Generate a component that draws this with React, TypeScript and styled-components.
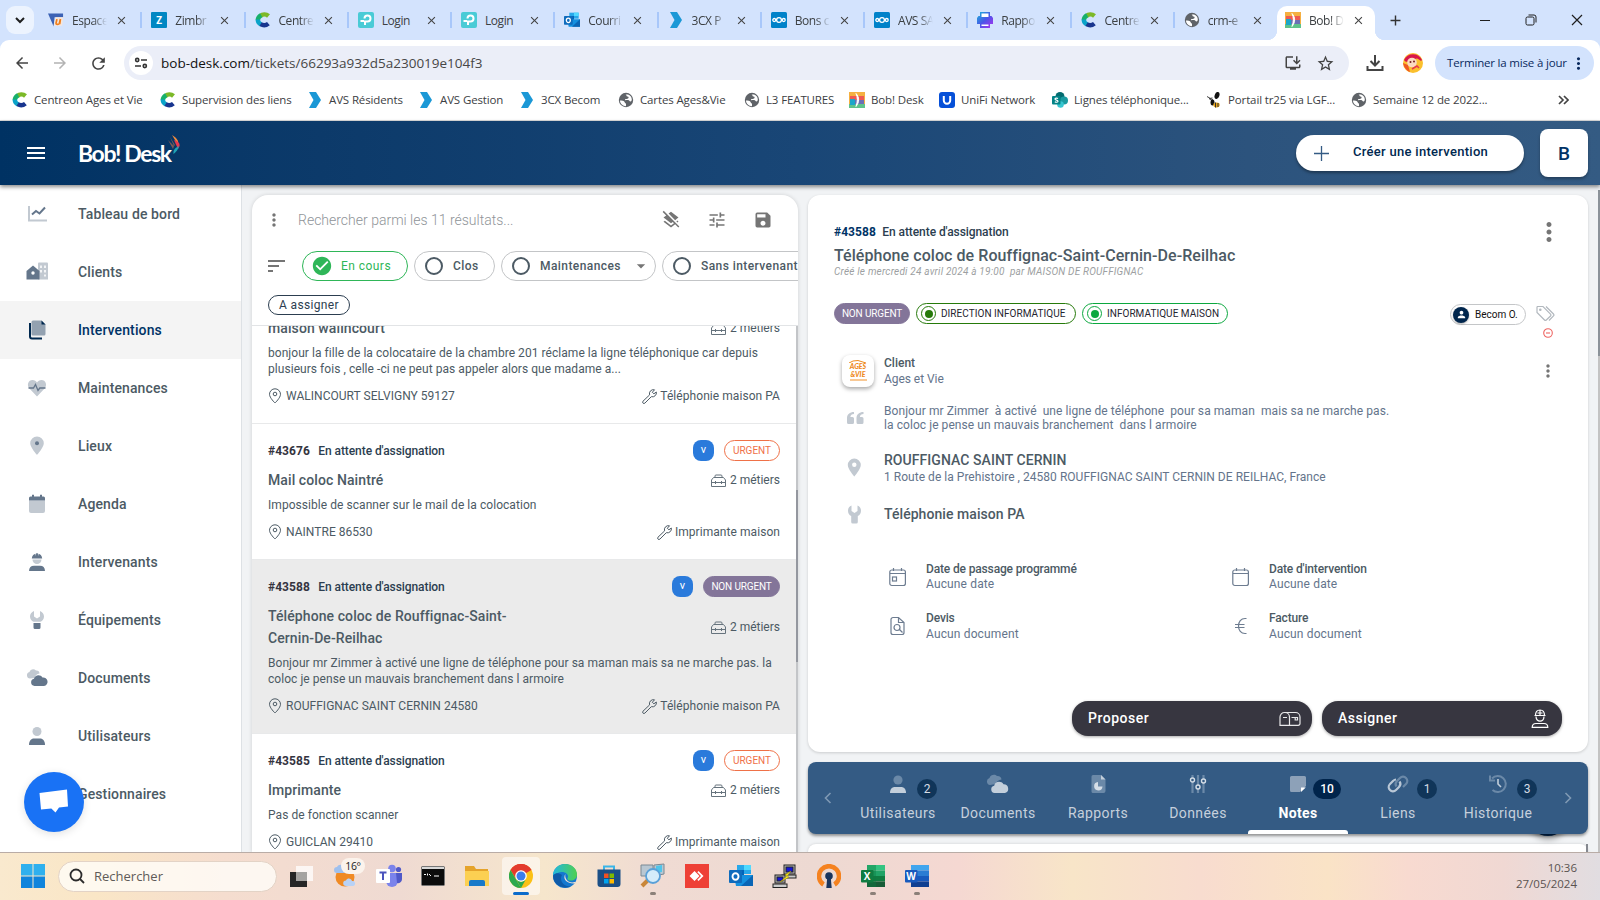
import React from "react";
import styled, { createGlobalStyle, css } from "styled-components";
import {
  MdArrowBack, MdArrowForward, MdRefresh, MdClose, MdAdd, MdMoreVert, MdTune, MdSave, MdLayersClear,
  MdCheckCircle, MdArrowDropDown, MdStarBorder, MdInstallDesktop, MdPerson,
} from "react-icons/md";

const GlobalStyle = createGlobalStyle`
  * { box-sizing: border-box; }
  html, body { margin: 0; padding: 0; }
  body { width: 1600px; height: 900px; overflow: hidden; font-family: Roboto, "Liberation Sans", sans-serif; background: #f1f3f5; }
  svg { display: block; flex: none; }
`;

const UI_FONT = '"Open Sans", "Noto Sans", sans-serif';
const LIGHT = "#c2c9d1";
const DARK = "#64768b";

const Screen = styled.div`
  width: 1600px; height: 900px; display: flex; flex-direction: column; overflow: hidden;
`;

/* ---------- Browser chrome ---------- */
const TabStrip = styled.div`
  height: 40px; flex: none; background: #d3e3fd; display: flex; align-items: flex-end; padding-left: 6px;
  font-family: ${UI_FONT};
`;
const TabSearch = styled.div`
  width: 28px; height: 28px; margin: 0 4px 6px 0; border-radius: 9px; background: #ecf3fe;
  display: flex; align-items: center; justify-content: center; color: #1f1f1f;
`;
const TabItem = styled.div<{ $active?: boolean; $last?: boolean }>`
  position: relative; width: 103.25px; height: 34px; flex: none; display: flex; align-items: center;
  padding: 0 0 6px 10px; gap: 5px;
  ${(p) => !p.$active && !p.$last && css`
    &::after { content: ""; position: absolute; right: -1px; top: 6px; width: 2px; height: 16px; background: #a8c7fa; }
  `}
  ${(p) => p.$active && css`
    width: 98px; background: #fff; border-radius: 10px 10px 0 0; padding-left: 8px;
    &::before, &::after { content: ""; position: absolute; bottom: 0; width: 10px; height: 10px; }
    &::before { left: -10px; background: radial-gradient(circle at 0 0, transparent 10px, #fff 10.5px); }
    &::after { right: -10px; background: radial-gradient(circle at 100% 0, transparent 10px, #fff 10.5px); }
  `}
`;
const TabTitle = styled.div<{ $fade?: boolean }>`
  width: 38px; margin-left: 3px; overflow: hidden; white-space: nowrap; font-size: 12px; letter-spacing: -0.45px; color: #3c4043;
  ${(p) => p.$fade && css`-webkit-mask-image: linear-gradient(90deg, #000 55%, transparent 92%); mask-image: linear-gradient(90deg, #000 55%, transparent 92%);`}
`;
const TabClose = styled.div`
  color: #444; display: flex; stroke: currentColor; stroke-width: 1px;
`;
const WindowButtons = styled.div`
  margin-left: auto; display: flex; width: 138px; height: 40px; align-items: center; justify-content: space-around; color: #1f1f1f;
`;
const NewTab = styled.div`margin: 0 0 11px 12px; color: #333; display: flex;`;

const ToolbarOuter = styled.div`height: 48px; flex: none; background: #d3e3fd;`;
const Toolbar = styled.div`
  height: 48px; background: #fff; border-radius: 9px 9px 0 0; display: flex; align-items: center; padding: 0 6px 2px 13px;
  color: #474747; font-family: ${UI_FONT};
`;
const NavIcon = styled.div<{ $muted?: boolean }>`
  width: 38px; display: flex; color: ${(p) => (p.$muted ? "#b3b3b3" : "#444")};
`;
const Omnibox = styled.div`
  width: 1225px; height: 34px; border-radius: 17px; background: #ebeef8; display: flex; align-items: center;
  padding: 0 14.5px 0 5px; margin-left: -3px;
`;
const SiteInfo = styled.div`
  width: 24px; height: 24px; border-radius: 50%; background: #fff; display: flex; align-items: center; justify-content: center; margin-right: 8px;
`;
const Url = styled.div`font-size: 13.5px; letter-spacing: 0; color: #474747; flex: 1; margin-top: -1px; b { font-weight: 400; color: #111; }`;
const OmniIcons = styled.div`display: flex; gap: 14px; color: #444;`;
const DownloadSlot = styled.div`margin-left: 16px; color: #444;`;
const ProfileSlot = styled.div`margin: 0 12px 0 18px;`;
const UpdatePill = styled.div`
  width: 159px; height: 34px; border-radius: 17px; background: #d3e3fd; color: #0a2a5e; display: flex; align-items: center;
  font-size: 11.5px; letter-spacing: -0.18px; padding-left: 12px; white-space: nowrap; gap: 2px;
  span { margin-top: -1px; }
`;

const Bookmarks = styled.div`
  height: 33px; flex: none; background: #fff; border-bottom: 1px solid #dcdcdc; display: flex; align-items: center;
  padding: 0 0 9px 12px; font-family: ${UI_FONT}; color: #3c4043;
`;
const Bookmark = styled.div<{ $w: number }>`
  width: ${(p) => p.$w}px; display: flex; align-items: center; gap: 6px; flex: none; font-size: 11.5px; letter-spacing: -0.13px; white-space: nowrap;
`;
const Overflow = styled.div`margin-left: auto; padding-right: 31px; color: #444;`;

/* ---------- Application header ---------- */
const Header = styled.header`
  position: relative; z-index: 3; height: 64px; flex: none; display: flex; align-items: center; padding: 0 12px 0 27px;
  background: linear-gradient(90deg, #003263 0%, #0c3a6a 20%, #194676 50%, #2c537d 78%, #345b83 100%);
  box-shadow: 0 2px 4px rgba(0, 0, 0, 0.45);
`;
const Burger = styled.div`
  width: 18px; height: 12px; border-top: 2px solid #fff; border-bottom: 2px solid #fff; display: flex; align-items: center;
  &::before { content: ""; width: 100%; height: 2px; background: #fff; }
`;
const Brand = styled.div`
  margin-left: 33px; display: flex; color: #fff; font-family: Lato, sans-serif; font-weight: 700; font-size: 23px; letter-spacing: -1.4px;
  line-height: 30px; white-space: nowrap;
`;
const Feather = styled.svg`margin: -3px 0 0 -3px;`;
const CreateButton = styled.div`
  margin-left: auto; width: 228px; height: 36px; border-radius: 18px; background: #fff; box-shadow: 0 2px 3px rgba(0, 0, 0, 0.35);
  display: flex; align-items: center; padding-left: 18px; gap: 24px; color: #002850; font-weight: 500; font-size: 13px; letter-spacing: 0.29px;
  span { margin-top: -3px; }
`;
const Avatar = styled.div`
  margin-left: 16px; width: 48px; height: 48px; border-radius: 8px; background: #fff; box-shadow: 0 2px 3px rgba(0, 0, 0, 0.3);
  display: flex; align-items: center; justify-content: center; color: #003366; font-weight: 500; font-size: 19px;
`;

/* ---------- Body ---------- */
const Body = styled.div`flex: none; height: 667px; display: flex; overflow: hidden; position: relative;`;
const Sidebar = styled.nav`width: 242px; flex: none; background: #fff; border-right: 1px solid #dde1e5; position: relative;`;
const NavItem = styled.div<{ $active?: boolean }>`
  height: 58px; display: flex; align-items: center; padding-left: 25px; gap: 29px; font-size: 14px; font-weight: 500; letter-spacing: 0.12px;
  color: ${(p) => (p.$active ? "#003366" : "#4c5a64")};
  background: ${(p) => (p.$active ? "#f4f4f4" : "transparent")};
`;
const ChatBubble = styled.div`
  position: absolute; left: 24px; top: 587px; width: 60px; height: 60px; border-radius: 50%; background: #1972f5;
  box-shadow: 0 2px 8px rgba(0, 0, 0, 0.12); display: flex; align-items: center; justify-content: center;
`;
const Content = styled.main`flex: 1; display: flex; padding: 10px 0 0 10px; gap: 10px; background: #f1f3f5; position: relative;`;

const ListPanel = styled.section`
  width: 546px; flex: none; background: #fff; border-radius: 16px 16px 0 0; overflow: hidden; display: flex; flex-direction: column;
  box-shadow: 0 0 4px rgba(0, 0, 0, 0.14);
`;
const SearchRow = styled.div`
  height: 50px; display: flex; align-items: center; padding: 0 25px 0 12px; color: #757575; flex: none;
`;
const Placeholder = styled.div`
  margin-left: 14px; flex: 1; font-size: 14px; font-weight: 300; letter-spacing: 0; color: #8f9498;
`;
const SearchIcons = styled.div`display: flex; gap: 26px;`;
const FilterRow = styled.div`
  height: 42px; padding: 6px 0 6px 16px; display: flex; align-items: center; color: #757575; flex: none; overflow: hidden;
`;
const SortBars = styled.div`
  width: 34px; display: flex; flex-direction: column; gap: 3px; flex: none;
  i { height: 2px; background: #757575; width: 17px; }
  i:nth-child(2) { width: 11px; }
  i:nth-child(3) { width: 5px; }
`;
const FilterChip = styled.div<{ $w: number; $on?: boolean }>`
  width: ${(p) => p.$w}px; height: 30px; border-radius: 15px; border: 1px solid ${(p) => (p.$on ? "#2fb658" : "#c3c5c7")}; flex: none;
  display: flex; align-items: center; padding-left: 10px; margin-right: 6px; gap: 10px; font-size: 12px; font-weight: ${(p) => (p.$on ? 400 : 500)}; letter-spacing: ${(p) => (p.$on ? 0.45 : 0.42)}px;
  color: ${(p) => (p.$on ? "#2fb658" : "#4c5a64")}; white-space: nowrap;
`;
const Ring = styled.div`width: 18px; height: 18px; border-radius: 50%; border: 2px solid #4c5a64; flex: none;`;
const CheckSlot = styled.div`width: 18px; display: flex; justify-content: center;`;
const AssignRow = styled.div`height: 39px; border-bottom: 1px solid #e2e4e6; padding: 8px 16px 0; flex: none;`;
const AssignChip = styled.div`
  width: 82px; height: 20px; border-radius: 10px; border: 1px solid #2c3e50; font-size: 12px; line-height: 18px; letter-spacing: 0.35px;
  padding-left: 10px; color: #2c3e50;
`;
const Scroller = styled.div`flex: 1; overflow: hidden; position: relative; display: flex; min-height: 0;`;
const Tickets = styled.div`flex: 1; margin-top: -12px;`;
const Track = styled.div`width: 2px; background: #c3c5c8; padding-top: 164px; &::before { content: ""; display: block; height: 172px; background: #94979f; }`;

const Ticket = styled.article<{ $selected?: boolean; $tail?: boolean }>`
  padding: ${(p) => (p.$tail ? "3px" : "16px")} 16px 19px; border-bottom: 1px solid #e8e9ea;
  background: ${(p) => (p.$selected ? "#ebebeb" : "#fff")}; color: #4c5a64;
`;
const TicketTop = styled.div`height: 21px; display: flex; align-items: center; margin-bottom: 8px;`;
const TicketId = styled.span<{ $blue?: boolean }>`
  font-size: 12px; font-weight: 700; letter-spacing: 0.05px; margin-right: ${(p) => (p.$blue ? 6.5 : 8.5)}px; color: ${(p) => (p.$blue ? "#003366" : "#35343f")};
`;
const Status = styled.span`font-size: 12px; font-weight: 500; letter-spacing: -0.08px; color: #2c3e50; flex: 1;`;
const Who = styled.span`
  width: 21px; height: 21px; border-radius: 8px; background: #2a7adb; color: #fff; font-size: 11px; line-height: 20px; text-align: center; margin-right: 10px;
`;
const Priority = styled.span<{ $urgent?: boolean; $narrow?: boolean }>`
  width: ${(p) => (p.$urgent ? 56 : p.$narrow ? 76 : 77)}px; height: 21px; border-radius: 11px; font-size: 10px; line-height: 19px; text-align: center;
  letter-spacing: ${(p) => (p.$urgent ? 0 : -0.15)}px; white-space: nowrap; flex: none;
  border: 1px solid ${(p) => (p.$urgent ? "#ef7148" : "#837599")}; background: ${(p) => (p.$urgent ? "#fff" : "#837599")};
  color: ${(p) => (p.$urgent ? "#ef7148" : "#fff")};
`;
const TitleRow = styled.div`display: flex; align-items: center; justify-content: space-between; margin-bottom: 6px;`;
const TicketTitle = styled.div`font-size: 14px; font-weight: 500; line-height: 22px; width: 250px; letter-spacing: 0.09px; white-space: pre;`;
const Jobs = styled.div`display: flex; align-items: center; gap: 4px; font-size: 12px;`;
const Desc = styled.div`font-size: 12px; line-height: 16px; margin-bottom: 11px; white-space: pre; letter-spacing: 0.05px;`;
const TicketBottom = styled.div`display: flex; justify-content: space-between; font-size: 12px; line-height: 16px; height: 16px; letter-spacing: 0.03px;`;
const IconText = styled.div`display: flex; align-items: center; gap: 4px; white-space: nowrap;`;
const JobText = styled(IconText)`gap: 3px; letter-spacing: 0.06px;`;

const RightCol = styled.div`width: 780px; flex: none; display: flex; flex-direction: column;`;
const Detail = styled.section`
  height: 557px; flex: none; background: #fff; border-radius: 12px; box-shadow: 0 1px 3px rgba(0, 0, 0, 0.16); padding: 29px 26px 0;
`;
const DetailHead = styled.div`display: flex; justify-content: space-between;`;
const IdLine = styled.div`display: flex; height: 16px; align-items: center; white-space: nowrap;`;
const DetailTitle = styled.h1`
  margin: 6px 0 0; font-size: 16px; line-height: 20px; font-weight: 500; letter-spacing: 0.06px; color: #4c5a64; white-space: nowrap;
`;
const Created = styled.div`font-size: 10px; line-height: 12px; font-style: italic; color: #9d9fa2; letter-spacing: 0.21px; white-space: pre;`;
const HeadDots = styled.div`margin: -7px -2px 0 0; color: #757575;`;
const PillRow = styled.div`margin-top: 25px; height: 22px; display: flex; align-items: flex-start;`;
const SkillPill = styled.div<{ $w: number; $c: string }>`
  width: ${(p) => p.$w}px; height: 21px; border: 1px solid ${(p) => p.$c}; border-radius: 11px; margin-left: 6px; display: flex; align-items: center;
  padding-left: 4px; gap: 5px; font-size: 10px; letter-spacing: 0.04px; white-space: nowrap; color: #26252f;
`;
const Dot = styled.i<{ $c: string }>`
  width: 15px; height: 15px; border-radius: 50%; border: 1.5px solid ${(p) => p.$c}; display: flex; align-items: center; justify-content: center;
  &::before { content: ""; width: 8px; height: 8px; border-radius: 50%; background: ${(p) => p.$c}; }
`;
const Owner = styled.div`
  margin: 1px 10px 0 auto; width: 76px; height: 21px; border: 1px solid #c4c6c8; border-radius: 11px; display: flex; align-items: center;
  gap: 6px; padding-left: 2px; font-size: 10px; color: #111; white-space: nowrap;
`;
const OwnerIcon = styled.div`
  width: 16px; height: 16px; border-radius: 50%; background: #00264d; color: #fff; display: flex; align-items: center; justify-content: center;
  box-shadow: 0 1px 2px rgba(0, 0, 0, 0.3);
`;
const TagSlot = styled.div`width: 19px; margin-right: 7px; display: flex; flex-direction: column; align-items: center; gap: 6px; padding: 2px 0 0;`;

const InfoRow = styled.div<{ $mt: number; $h: number }>`margin-top: ${(p) => p.$mt}px; height: ${(p) => p.$h}px; display: flex; align-items: center; color: #64748b;`;
const InfoIcon = styled.div`width: 50px; padding-left: 13px; display: flex; flex: none;`;
const LogoSlot = styled.div`width: 50px; padding-left: 8px; display: flex; flex: none;`;
const ClientLogo = styled.div`
  width: 32px; height: 32px; border-radius: 8px; background: #fff; box-shadow: 0 2px 4px rgba(0, 0, 0, 0.35); color: #ee8a1d;
  font-family: Lato, sans-serif; font-weight: 900; font-style: italic; font-size: 7px; line-height: 7.5px;
  display: flex; flex-direction: column; align-items: center; padding-top: 5px;
`;
const LogoBar = styled.div`width: 17px; height: 2px; background: #f8c894; margin-top: 1px;`;
const InfoText = styled.div<{ $lh?: number; $ls?: number }>`font-size: 12px; line-height: ${(p) => p.$lh ?? 16}px; letter-spacing: ${(p) => p.$ls ?? 0.03}px; white-space: pre; flex: 1;`;
const Label = styled.div`color: #4c5a64; font-weight: 500; letter-spacing: 0;`;
const Heading = styled.div`font-size: 14px; line-height: 18px; font-weight: 500; letter-spacing: 0.06px; color: #4c5a64;`;
const RowDots = styled.div`margin-right: 4px; color: #757575;`;
const FieldGrid = styled.div`margin: 38px 0 0 50px; display: grid; grid-template-columns: 343px 1fr; row-gap: 18px;`;
const Field = styled.div<{ $lh: number }>`display: flex; align-items: center; color: #64748b; font-size: 12px; line-height: ${(p) => p.$lh}px; letter-spacing: 0.14px;`;
const FieldIcon = styled.div`width: 42px; padding-left: 5px;`;
const FieldLabel = styled.div`font-weight: 500; color: #4c5a64; letter-spacing: -0.15px; line-height: 16px;`;
const Actions = styled.div`display: flex; justify-content: flex-end; gap: 10px; margin-top: 59px;`;
const Action = styled.div`
  width: 240px; height: 35px; border-radius: 16px; background: #373640; color: #fff; display: flex; align-items: center; justify-content: space-between;
  padding: 0 11px 0 16px; font-size: 14px; font-weight: 500; letter-spacing: 0.5px; box-shadow: 0 1px 3px rgba(0, 0, 0, 0.35);
  span { margin-top: -2px; }
`;

const TabBar = styled.div`
  margin-top: 10px; height: 72px; flex: none; border-radius: 8px; background: #345b84; box-shadow: 0 2px 3px rgba(0, 0, 0, 0.4);
  display: flex; align-items: stretch; position: relative; z-index: 2;
`;
const Arrow = styled.div`width: 40px; display: flex; align-items: center; justify-content: center;`;
const SectionTab = styled.div<{ $on?: boolean }>`
  position: relative; width: 100px; display: flex; flex-direction: column; align-items: center; padding-top: 12px; font-size: 14px;
  line-height: 16px; letter-spacing: ${(p) => (p.$on ? 0.3 : 0.42)}px; color: ${(p) => (p.$on ? "#fff" : "#c6d0dc")}; font-weight: ${(p) => (p.$on ? 700 : 400)};
  white-space: nowrap; gap: 11px;
  ${(p) => p.$on && css`&::after { content: ""; position: absolute; left: 0; right: 0; bottom: 0; height: 4px; background: #fff; border-radius: 3px 3px 0 0; }`}
`;
const TabGlyph = styled.div`height: 20px; display: flex; align-items: center;`;
const Count = styled.div<{ $on?: boolean }>`
  position: absolute; top: 17px; left: ${(p) => (p.$on ? 65 : 69)}px; height: 20px; width: ${(p) => (p.$on ? 28 : 20)}px; border-radius: 10px;
  background: ${(p) => (p.$on ? "#00244b" : "#103559")}; color: ${(p) => (p.$on ? "#fff" : "#d5dde6")}; font-size: 12px; line-height: 20px; font-weight: ${(p) => (p.$on ? 500 : 400)};
  text-align: center; letter-spacing: 0;
`;
const NextPanel = styled.div`
  margin-top: 10px; height: 20px; flex: none; background: #fff; border-radius: 8px 8px 0 0; box-shadow: 0 0 3px rgba(0, 0, 0, 0.15);
  display: flex; justify-content: flex-end; &::after { content: ""; width: 2px; background: #85888f; }
`;
const Fab = styled.div`
  position: absolute; right: 32px; top: 611px; width: 40px; height: 40px; border-radius: 50%; background: #00244b; box-shadow: 0 2px 7px rgba(0, 0, 0, 0.5); z-index: 1;
`;
const PageScroll = styled.div`
  margin: -5px 0 0 auto; width: 2px; background: #c3c3c3; &::before { content: ""; display: block; height: 166px; background: #8b9299; }
`;

/* ---------- Taskbar ---------- */
const Taskbar = styled.footer`
  height: 48px; flex: none; border-top: 1px solid #b9aca6; display: flex; align-items: center; padding: 0 23px 1px 21px; font-family: ${UI_FONT};
  background: linear-gradient(90deg, #f9e9ce 0%, #fae6c6 6%, #f5ddcf 14%, #efdad2 25%, #f6e6cc 34%, #f0dbd3 41%, #edd9d2 51%, #f5d8d2 60%, #f8e5c8 67%, #f8dccf 75%, #fae3c6 83%, #f8dad0 88%, #f0d8d3 94%, #e1dde1 100%);
`;
const SearchBox = styled.div`
  margin: 0 2px 0 13px; width: 219px; height: 31px; border-radius: 16px; background: rgba(255, 252, 248, 0.82); border: 1px solid #e3d3c6;
  display: flex; align-items: center; padding-left: 10px; gap: 9px; font-size: 13px; color: #5f5b58;
`;
const AppSlot = styled.div<{ $focus?: boolean }>`
  position: relative; width: 44px; height: 44px; display: flex; align-items: center; justify-content: center;
  ${(p) => p.$focus && css`
    &::before { content: ""; position: absolute; inset: 3px; border-radius: 4px; background: rgba(255, 255, 255, 0.55); }
  `}
  svg { position: relative; }
`;
const Running = styled.i<{ $focus?: boolean }>`
  position: absolute; bottom: ${(p) => (p.$focus ? 3 : 3)}px; left: 50%; width: ${(p) => (p.$focus ? 16 : 6)}px; margin-left: ${(p) => (p.$focus ? -8 : -3)}px;
  height: 3px; border-radius: 2px; background: ${(p) => (p.$focus ? "#0b6bcb" : "#8b8079")};
`;
const Temp = styled.span`
  position: absolute; right: 2px; top: 4px; height: 16px; width: 24px; border-radius: 8px; background: #fbf3ec; font-size: 10.5px; line-height: 16px;
  text-align: center; color: #222; letter-spacing: -0.3px;
`;
const Clock = styled.div`margin-left: auto; text-align: right; font-size: 11.5px; line-height: 16px; color: #5a5350; span { display: block; }`;

/* ---------- Small drawings ---------- */
const Centreon = () => (
  <svg width="16" height="16" viewBox="0 0 16 16" fill="none" strokeWidth="4.400">
    <path d="M13.500 4C11 1.800 7.500 2.200 5.400 4" stroke="#7cb928" />
    <path d="M6.200 3.200C4 4.400 2.800 6.200 2.800 8.200" stroke="#17b06b" />
    <path d="M2.800 7.600c0 2.400 1.200 4 3.400 5" stroke="#0aa3c9" />
    <path d="M5.600 12.200c2.600 1.600 5.600 1.200 7.800-.6" stroke="#18358f" />
  </svg>
);
const Chevron3 = () => (
  <svg width="16" height="16" viewBox="0 0 16 16"><path d="M2 0h7l5 8-5 8H2l4.500-8z" fill="#1b98d6" /></svg>
);
const Globe = () => (
  <svg width="16" height="16" viewBox="0 0 16 16"><circle cx="8" cy="8" r="7.200" fill="#5f6368" /><path d="M2 8.500c1.500-.3 3 0 4 .8s.5 2 2 2.200v2.700C5 14 2 12 2 8.500zM7.500 2.500C9 3 8 4.500 9.500 4.500s1.500 2 0 2.300-2.500.2-2.500 1 1.500 0 3 .3 1.500 1.700 2.500 1.500 1.200-1 1.300-2C13.800 4 11 2 7.500 2.500z" fill="#fff" /></svg>
);
const BobIcon = () => (
  <svg width="16" height="16" viewBox="0 0 16 16"><rect width="16" height="16" fill="#f5b041" /><path d="M1 4h14v4H1z" fill="#ee5a52" /><path d="M1 8h14v4H1z" fill="#6a6fb5" /><path d="M0 12h16v4H0z" fill="#5fc28b" /><path d="M1 7h5v6H1z" fill="#1ba6c9" /><path d="M7 1.500c3.500 4 3.500 8.500 0 13 1.800-5 1.800-9 0-13z" fill="#fff" stroke="#fff" strokeWidth="1" /></svg>
);
const LetterTile = styled.span<{ $bg: string }>`
  width: 16px; height: 16px; flex: none; background: ${(p) => p.$bg}; color: #fff; font: 700 10px/16px "Open Sans", sans-serif; text-align: center; border-radius: 1px;
`;
const UnivIcon = () => (
  <svg width="16" height="16" viewBox="0 0 17 16"><path d="M0 1h16v4H7l-1 10z" fill="#3b62b5" /><path d="M8 5h8l-1 9H6z" fill="#f4e6dc" /><path d="M9.500 7l-1 4.500c0 1.500 3 1.500 3.600 0L13.200 7l-.8 5.500" fill="none" stroke="#ef7d1a" strokeWidth="1.800" /></svg>
);
const TpLink = () => (
  <svg width="16" height="16" viewBox="0 0 16 16"><rect width="16" height="16" rx="2" fill="#4acbd6" /><path d="M2.500 9h3.500M7 13V9.500h2.500a3 3 0 1 0-3-3" fill="none" stroke="#fff" strokeWidth="2" /></svg>
);
const Outlook = ({ s = 16 }: { s?: number }) => (
  <svg width={s} height={s} viewBox="0 0 24 24"><path d="M8 1h14v9H8z" fill="#28a8ea" /><path d="M15 1h7v5h-7z" fill="#50d9ff" /><path d="M8 6h7v6H8z" fill="#0364b8" /><path d="M5 11h19v11H7z" fill="#1490df" /><path d="M24 11v11H12z" fill="#0a65b5" /><rect y="6" width="13" height="13" rx="1" fill="#0f6cbd" /><ellipse cx="6.500" cy="12.500" rx="3" ry="3.300" fill="none" stroke="#fff" strokeWidth="1.900" /></svg>
);
const Nextcloud = () => (
  <svg width="16" height="16" viewBox="0 0 16 16" fill="none" stroke="#fff" strokeWidth="1.300"><rect width="16" height="16" rx="1.500" fill="#0082c9" stroke="none" /><circle cx="8" cy="8" r="2.400" /><circle cx="3.300" cy="8" r="1.500" /><circle cx="12.700" cy="8" r="1.500" /></svg>
);
const PrinterIcon = () => (
  <svg width="16" height="16" viewBox="0 0 16 16"><defs><linearGradient id="prn" x1="0" y1="0" x2="1" y2="1"><stop offset="0" stopColor="#18b9d8" /><stop offset=".5" stopColor="#4a55e8" /><stop offset="1" stopColor="#b12ff0" /></linearGradient></defs><path d="M3 0h10v4h1.500L16 6v6h-3v4H3v-4H0V6l1.500-2H3z" fill="url(#prn)" /><path d="M4.500 1.500h7V5h-7zM4.500 12.500h7V14h-7z" fill="#fff" /></svg>
);
const UniFi = () => (
  <svg width="16" height="16" viewBox="0 0 16 16"><rect width="16" height="16" rx="3" fill="#0650d8" /><path d="M4.800 4v4.500a3.200 3.200 0 0 0 6.400 0V4" fill="none" stroke="#fff" strokeWidth="2" /></svg>
);
const SharePoint = () => (
  <svg width="16" height="16" viewBox="0 0 16 16"><circle cx="8" cy="4.500" r="4.500" fill="#036c70" /><circle cx="12" cy="8.500" r="4" fill="#1a9ba1" /><circle cx="8.500" cy="12.500" r="3.300" fill="#37c6d0" /><rect y="4" width="8.500" height="8.500" rx="1" fill="#038387" /><path d="M6 6.500c-1-.7-3-.6-3 .5 0 1.300 3 .8 3 2.300 0 1.100-2 1.200-3.200.5" fill="none" stroke="#fff" strokeWidth="1.200" /></svg>
);
const Bee = () => (
  <svg width="16" height="16" viewBox="0 0 16 16"><path d="M7 8L1 4.500M6.500 6L3 6.500l4 3" stroke="#444" fill="none" /><ellipse cx="11" cy="3.500" rx="2.300" ry="3.600" transform="rotate(20 11 3.500)" fill="#111" /><ellipse cx="6.500" cy="10.500" rx="2" ry="3" fill="#111" /><ellipse cx="10.500" cy="13" rx="3.200" ry="2.400" fill="#e8a51d" /><path d="M9.500 10.500v5M12 11v4" stroke="#333" /></svg>
);

const Duo = ({ name }: { name: string }) => {
  const g: Record<string, React.ReactNode> = {
    chart: <><path d="M3 3v14.500h18" stroke={LIGHT} strokeWidth="2" fill="none" transform="translate(1 1)" /><path d="M7 12.500l4-3.500 3.500 2.500 5.500-6" stroke={DARK} strokeWidth="2" fill="none" /></>,
    clients: <><path d="M13 3.500a1 1 0 0 1 1-1h8a1 1 0 0 1 1 1V19.500H13z" fill={LIGHT} /><path d="M16 5.500v2.500M20 5.500v2.500M16 10v2.500M20 10v2.500M20 14.500v2" stroke="#fff" strokeWidth="1.600" /><path d="M1.500 11L8 5.500l6.500 5.500v8.500h-13z" fill={DARK} /><circle cx="8" cy="13" r="1.700" fill="#fff" /></>,
    interventions: <><path d="M5 5v13.500a2 2 0 0 0 2 2h10" stroke="#00284f" strokeWidth="2" fill="none" /><path d="M8 2.500h8.500l4 4V16a1.500 1.500 0 0 1-1.500 1.500H8A1.500 1.500 0 0 1 6.500 16V4A1.500 1.500 0 0 1 8 2.500z" fill="#93a1b0" /><path d="M16.500 2.500v4h4z" fill="#00284f" /></>,
    heart: <><path d="M12 20.500L4.200 12.300C1.500 9 3.300 4 7.500 4c2 0 3.500 1 4.500 2.500C13 5 14.500 4 16.500 4c4.200 0 6 5 3.300 8.300z" fill={LIGHT} /><path d="M3.500 12h5l2-3.500 2.500 6 1.800-2.500h5.700" stroke={DARK} strokeWidth="1.300" fill="none" /></>,
    pin: <><path d="M12 21S5.200 13.500 5.200 9.300a6.800 6.800 0 0 1 13.600 0c0 4.200-6.800 11.700-6.800 11.700z" fill={LIGHT} /><circle cx="12" cy="9.300" r="2" fill={DARK} /></>,
    agenda: <><path d="M4 8.500h16V19a2 2 0 0 1-2 2H6a2 2 0 0 1-2-2z" fill={LIGHT} /><path d="M4 8.500V6a1.500 1.500 0 0 1 1.500-1.500H7V2.800h2v1.700h6V2.800h2v1.700h1.500A1.500 1.500 0 0 1 20 6v2.500z" fill={DARK} /></>,
    worker: <><path d="M7.500 9.500h9a4.500 4.500 0 0 1-9 0z" fill={LIGHT} /><path d="M6.800 8.500C7 5.500 9 4 10.500 3.800V6l1-3h1l1 3V3.800C15 4 17 5.500 17.200 8.500z" fill={DARK} /><path d="M4 21c0-3.500 2-5.200 5-5.200h6c3 0 5 1.700 5 5.200z" fill={DARK} /></>,
    wrench: <><path d="M9 3v5.500l3 2 3-2V3c2.500 1 4 3 4 5.500 0 2.300-1.500 4.500-3.500 5.300H8.500C6.500 13 5 10.800 5 8.500 5 6 6.500 4 9 3z" fill={LIGHT} /><path d="M8.500 15h7v4.500A1.500 1.500 0 0 1 14 21h-4a1.500 1.500 0 0 1-1.500-1.500z" fill={DARK} /></>,
    clouds: <><path d="M5 12.500a3.300 3.300 0 0 1-.5-6.500C5.500 3 9 2.500 11 4.500c2-.3 3.500 1 3.500 3-3 .5-4 2-5 4.500z" fill={LIGHT} /><path d="M9.500 20a3.700 3.700 0 0 1-.5-7.300c.8-4 6.500-4.700 8.500-1.200A4.300 4.300 0 0 1 19 20z" fill={DARK} /></>,
    user: <><circle cx="12" cy="7.500" r="4.500" fill={LIGHT} /><path d="M4 21c0-4 2-6.500 5-6.500h6c3 0 5 2.500 5 6.500z" fill={DARK} /></>,
  };
  return <svg width="24" height="24" viewBox="0 0 24 24">{g[name]}</svg>;
};

const PinOutline = () => (
  <svg width="14" height="16" viewBox="0 0 14 16" fill="none" stroke="#4c5a64" strokeWidth="1"><path d="M7 15S1.500 9.800 1.500 6.300a5.500 5.500 0 0 1 11 0C12.500 9.800 7 15 7 15z" /><circle cx="7" cy="6" r="1.800" /></svg>
);
const Spanner = () => (
  <svg width="15" height="15" viewBox="0 0 15 15" fill="none" stroke="#4c5a64" strokeWidth="1"><path d="M12.500.8A4 4 0 0 0 7.600 5.900L1 12.200a1.300 1.300 0 0 0 1.900 1.900L9.300 7.700A4 4 0 0 0 14.300 3l-2.400 1.800-1.600-1.500z" /></svg>
);
const Toolbox = () => (
  <svg width="15" height="13" viewBox="0 0 15 13" fill="none" stroke="#66737d" strokeWidth="1"><path d="M4 3.500V2a1 1 0 0 1 1-1h5a1 1 0 0 1 1 1v1.500M.5 6l2-2.500h10l2 2.500v6.500H.5zM.5 8.500h14M4.500 7v3M10.500 7v3" /></svg>
);
const Calendar = ({ dot }: { dot?: boolean }) => (
  <svg width="18" height="20" viewBox="0 0 18 20" fill="none" stroke="#6d7c90" strokeWidth="1.200"><rect x=".8" y="3" width="15.600" height="15.500" rx="2" /><path d="M1 6.500h15.500M4.500 1v3M12.500 1v3" />{dot && <rect x="3.500" y="10" width="4" height="4" />}</svg>
);
const DocSearch = () => (
  <svg width="16" height="20" viewBox="0 0 16 20" fill="none" stroke="#6d7c90" strokeWidth="1.200"><path d="M9.500 1.500H4a2 2 0 0 0-2 2v13a2 2 0 0 0 2 2h9a2 2 0 0 0 2-2V6.500zV6.500H15" /><circle cx="8" cy="11.500" r="3" /><path d="M10.500 13.500l3 3" /></svg>
);
const EuroSign = () => (
  <svg width="16" height="18" viewBox="-1.500 0 16 18" fill="none" stroke="#6d7c90" strokeWidth="1.200"><path d="M13 1.500h-1.500C7.500 1.500 5 4.800 5 9s2.500 7.500 6.500 7.500H13M1.500 7.500h9.500M1.500 10.500h9.500" /></svg>
);
const Tags = () => (
  <svg width="19" height="17" viewBox="0 0 19 17" fill="none" stroke="#b2b8be" strokeWidth="1.200"><path d="M1 2v5.500l7.500 7.500a1.300 1.300 0 0 0 1.800 0L14.500 11a1.300 1.300 0 0 0 0-1.800L7 1.500H1.500zM10 1.500l7.500 7.500a1.300 1.300 0 0 1 0 1.800L13 15.500" /><circle cx="4.300" cy="4.800" r=".7" /></svg>
);
const RedMinus = styled.svg.attrs({ width: 10, height: 10, viewBox: "0 0 10 10" })`fill: none; stroke: #ee6461; stroke-width: 1.1px; margin-left: 4px;`;
const Quote = () => (
  <svg width="17" height="12" viewBox="0 0 17 12" fill="#c2c9d1"><path d="M7 0v2C4.800 2 3.500 3.200 3.400 5H5.500A1.500 1.500 0 0 1 7 6.500v4A1.500 1.500 0 0 1 5.500 12h-4A1.500 1.500 0 0 1 0 10.500V6C0 2.500 2.800 0 7 0zM16.500 0v2c-2.200 0-3.500 1.200-3.600 3H15a1.500 1.500 0 0 1 1.500 1.500v4A1.500 1.500 0 0 1 15 12h-4a1.500 1.500 0 0 1-1.500-1.500V6c0-3.500 2.800-6 7-6z" /></svg>
);
const SolidPin = () => (
  <svg width="15" height="21" viewBox="0 0 15 21"><path d="M7.300 18.500S.8 11 .8 7a6.500 6.500 0 0 1 13 0c0 4-6.500 11.500-6.500 11.500z" fill="#c2c9d1" /><circle cx="7.300" cy="6.800" r="2.200" fill="#fff" /></svg>
);
const SolidWrench = () => (
  <svg width="15" height="19" viewBox="0 0 15 19"><path d="M4.500.5V6l3 2 3-2V.5c2.300 1 3.500 3 3.500 5.200 0 2.500-1.200 4.400-3.200 5.300V17a1.500 1.500 0 0 1-1.500 1.500H5.700A1.500 1.500 0 0 1 4.200 17v-6C2.200 10.100 1 8.200 1 5.700 1 3.500 2.200 1.500 4.500.5z" fill="#c2c9d1" /></svg>
);
const Mailbox = () => (
  <svg width="22" height="16" viewBox="0 0 22 16" fill="none" stroke="#e8e8ea" strokeWidth="1.200"><path d="M1 14.300V6a4.500 4.500 0 0 1 4.500-4.500h11A4.500 4.500 0 0 1 21 6v6.500a1.800 1.800 0 0 1-1.800 1.800H1.800zM10.500 14V6A4.500 4.500 0 0 0 6 1.500M4 6.500h4M12.500 6.500h6V9h-2.300V6.500" /></svg>
);
const WorkerLine = () => (
  <svg width="20" height="20" viewBox="0 0 20 20" fill="none" stroke="#fff" strokeWidth="1.200"><path d="M3.500 6.500h11M4.500 6.500C4.500 3 6.500 1 9 1s4.500 2 4.500 5.500M9 1v5.500M6.500 4h5M5 7.500c0 3 2 4.700 4 4.700s4-1.700 4-4.700M1.200 18.400c0-2.800 1.500-3.900 3.800-3.900h8c2.300 0 3.800 1.100 3.800 3.900z" /></svg>
);

const TAB_LIGHT = "#c3cfdb";
const TAB_DIM = "#6b89a8";
const sectionIcons: Record<string, React.ReactNode> = {
  user: <svg width="18" height="20" viewBox="0 0 18 20"><circle cx="9" cy="6" r="4.600" fill={TAB_DIM} /><path d="M1 19c0-4 2-6 5-6h6c3 0 5 2 5 6z" fill={TAB_LIGHT} /></svg>,
  clouds: <svg width="24" height="20" viewBox="0 0 24 20"><path d="M4 11a3.600 3.600 0 0 1-.5-7C4.500.5 9-.3 11 2c2.500-.3 4.500 1.500 4.500 3.500-3 .3-5 2-5.500 4.500z" fill={TAB_DIM} /><path d="M8.500 19a3.700 3.700 0 0 1-.3-7.300c.6-4.500 7-5.200 9.300-1.500A4.500 4.500 0 0 1 19 19z" fill={TAB_LIGHT} /></svg>,
  report: <svg width="15" height="20" viewBox="0 0 15 20"><path d="M2 1h8l4.500 4.500V17a2 2 0 0 1-2 2H2a1.500 1.500 0 0 1-1.500-1.500v-15A1.500 1.500 0 0 1 2 1z" fill="#6b89a8" /><path d="M10 1v4.500h4.500z" fill={TAB_LIGHT} /><path d="M7 8v4.500h4.500A4.200 4.200 0 1 1 7 8z" fill="#d5dee7" /></svg>,
  data: <svg width="18" height="20" viewBox="0 0 18 20" fill="none" strokeWidth="1.400"><path d="M3.500 1v18M9 1v18M14.500 1v18" stroke={TAB_DIM} strokeWidth="2.200" /><g fill="#345b84" stroke="#d5dee7"><circle cx="3.500" cy="6" r="2" /><circle cx="9" cy="13" r="2" /><circle cx="14.500" cy="7" r="2" /></g></svg>,
  note: <svg width="18" height="18" viewBox="0 0 18 18"><path d="M2.500 1h13A1.500 1.500 0 0 1 17 2.500V11l-6 6H2.500A1.500 1.500 0 0 1 1 15.500v-13A1.500 1.500 0 0 1 2.500 1z" fill="#8da1b8" /><path d="M12 17v-4.500h4.800z" fill="#fff" /></svg>,
  link: <svg width="22" height="18" viewBox="0 0 22 18" fill="none" strokeWidth="2.200"><path d="M9.500 11.500c-1.500-2-1-4 .5-5.500l3-3c2-2 4.500-1.500 6 0s2 4 0 6l-3 3" stroke={TAB_DIM} /><path d="M12.500 6.500c1.500 2 1 4-.5 5.500l-3 3c-2 2-4.500 1.500-6 0s-2-4 0-6l3-3c1-1 2-1.500 3-1.500" stroke="#b9c7d6" /></svg>,
  history: <svg width="20" height="20" viewBox="0 0 20 20" fill="none" strokeWidth="2"><path d="M4 4.500A8 8 0 1 1 4.500 16M2 1.500V6.500h5" stroke={TAB_DIM} /><path d="M10 5v5l3 3" stroke={TAB_LIGHT} strokeWidth="1.600" /></svg>,
};

/* ---------- Data ---------- */
const browserTabs = [
  { icon: <UnivIcon />, title: "Espace" }, { icon: <LetterTile $bg="#0087c3">Z</LetterTile>, title: "Zimbr" }, { icon: <Centreon />, title: "Centre" },
  { icon: <TpLink />, title: "Login" }, { icon: <TpLink />, title: "Login" }, { icon: <Outlook />, title: "Courri" }, { icon: <Chevron3 />, title: "3CX P" },
  { icon: <Nextcloud />, title: "Bons c" }, { icon: <Nextcloud />, title: "AVS SA" }, { icon: <PrinterIcon />, title: "Rappo" }, { icon: <Centreon />, title: "Centre" },
  { icon: <Globe />, title: "crm-e" },
];
const bookmarks = [
  { icon: <Centreon />, t: "Centreon Ages et Vie", w: 148 }, { icon: <Centreon />, t: "Supervision des liens", w: 147 }, { icon: <Chevron3 />, t: "AVS Résidents", w: 111 },
  { icon: <Chevron3 />, t: "AVS Gestion", w: 101 }, { icon: <Chevron3 />, t: "3CX Becom", w: 99 }, { icon: <Globe />, t: "Cartes Ages&Vie", w: 126 },
  { icon: <Globe />, t: "L3 FEATURES", w: 105 }, { icon: <BobIcon />, t: "Bob! Desk", w: 90 }, { icon: <UniFi />, t: "UniFi Network", w: 113 },
  { icon: <SharePoint />, t: "Lignes téléphonique...", w: 154 }, { icon: <Bee />, t: "Portail tr25 via LGF...", w: 145 }, { icon: <Globe />, t: "Semaine 12 de 2022...", w: 140 },
];
const nav = [
  ["chart", "Tableau de bord"], ["clients", "Clients"], ["interventions", "Interventions"], ["heart", "Maintenances"], ["pin", "Lieux"], ["agenda", "Agenda"],
  ["worker", "Intervenants"], ["wrench", "Équipements"], ["clouds", "Documents"], ["user", "Utilisateurs"], ["user", "Gestionnaires"],
];
interface TicketData { id?: string; title: string; desc: string; place: string; job: string; urgent?: boolean; selected?: boolean }
const tickets: TicketData[] = [
  { title: "maison walincourt", desc: "bonjour la fille de la colocataire de la chambre 201 réclame la ligne téléphonique car depuis\nplusieurs fois , celle -ci ne peut pas appeler alors que madame a...", place: "WALINCOURT SELVIGNY 59127", job: "Téléphonie maison PA" },
  { id: "#43676", title: "Mail coloc Naintré", desc: "Impossible de scanner sur le mail de la colocation", place: "NAINTRE 86530", job: "Imprimante maison", urgent: true },
  { id: "#43588", title: "Téléphone coloc de Rouffignac-Saint-\nCernin-De-Reilhac", desc: "Bonjour mr Zimmer à activé une ligne de téléphone pour sa maman mais sa ne marche pas. la\ncoloc je pense un mauvais branchement dans l armoire", place: "ROUFFIGNAC SAINT CERNIN 24580", job: "Téléphonie maison PA", selected: true },
  { id: "#43585", title: "Imprimante", desc: "Pas de fonction scanner", place: "GUICLAN 29410", job: "Imprimante maison", urgent: true },
];
const sections = [
  { icon: "user", t: "Utilisateurs", n: 2 }, { icon: "clouds", t: "Documents" }, { icon: "report", t: "Rapports" }, { icon: "data", t: "Données" },
  { icon: "note", t: "Notes", n: 10, on: true }, { icon: "link", t: "Liens", n: 1 }, { icon: "history", t: "Historique", n: 3 },
];

const OfficeApp = ({ letter, colors, tile }: { letter: "X" | "W"; colors: string[]; tile: string }) => (
  <svg width="24" height="24" viewBox="0 0 24 24">
    {colors.map((c, i) => <rect key={c} x="6" y={1 + i * 5.5} width="18" height="5.500" fill={c} />)}
    {letter === "X" && <path d="M6 1h9v22H6z" fill="#0d7a41" opacity=".4" />}
    <rect y="6" width="12.500" height="12.500" rx="1" fill={tile} />
    <text x="6.200" y="16" fontSize="10" fontWeight="700" fill="#fff" textAnchor="middle" fontFamily="Open Sans, sans-serif">{letter}</text>
  </svg>
);

const taskApps: { node: React.ReactNode; run?: boolean; focus?: boolean; temp?: boolean }[] = [
  { node: <svg width="24" height="24" viewBox="0 0 24 24"><path d="M1 8h17v15H1z" fill="#262626" /><path d="M7 2h17v15H7z" fill="#fff" opacity=".75" /><path d="M7 8h11v9H7z" fill="#a5a3a1" /></svg> },
  { temp: true, node: <svg width="26" height="26" viewBox="0 0 26 26"><circle cx="13" cy="14" r="9.500" fill="#f08a24" /><path d="M5 10a3 3 0 0 1 0-6c2-4 7-2 7 1 3 0 3 5 0 5z" fill="#9fc0ee" /><path d="M14 23a2.800 2.800 0 0 1 0-5.600c1.500-3 5.500-2 6 .6 4-.5 4 5 1 5z" fill="#b9d2f6" /></svg> },
  { node: <svg width="26" height="24" viewBox="0 0 26 24"><circle cx="16" cy="4.500" r="3.800" fill="#7b83eb" /><circle cx="22.500" cy="5.500" r="2.600" fill="#5059c9" /><path d="M10 9h12v8a6 6 0 0 1-12 0z" fill="#7b83eb" /><path d="M20 9h6v6a4 4 0 0 1-5 4z" fill="#5059c9" /><rect y="5" width="14" height="14" rx="1" fill="#fff" /><path d="M3.500 8.500h7M7 8.500V16" stroke="#4b53bc" strokeWidth="2" /></svg> },
  { node: <svg width="24" height="20" viewBox="0 0 24 20"><rect x=".5" y=".5" width="23" height="19" rx="1" fill="#0c0c0c" stroke="#777" /><path d="M1 1h22v2H1z" fill="#d8d8d8" /><path d="M3 8.500h2M6.500 7.500v2M8 8l2 2M13 10h5" stroke="#fff" /></svg> },
  { node: <svg width="26" height="24" viewBox="0 0 26 24"><path d="M1 2h9l2 3h12v17H1z" fill="#e5a32a" /><path d="M1 7h24v15H1z" fill="#fcd052" /><path d="M5 22v-4a2 2 0 0 1 2-2h12a2 2 0 0 1 2 2v4z" fill="#1779c9" /></svg> },
  { focus: true, node: <svg width="24" height="24" viewBox="0 0 24 24"><circle cx="12" cy="12" r="12" fill="#fbc116" /><path d="M12 12L1.600 6A12 12 0 0 1 22.400 6z" fill="#e33b2e" /><path d="M12 6h10.400A12 12 0 0 0 1.600 6L7 15z" fill="#e33b2e" /><path d="M1.600 6l5.300 9.200L12 24A12 12 0 0 1 1.600 6z" fill="#2da94f" /><path d="M7 15l5 3 4.500-2L12 24z" fill="#2da94f" /><circle cx="12" cy="12" r="5.800" fill="#fff" /><circle cx="12" cy="12" r="4.500" fill="#3b7ded" /></svg> },
  { node: <svg width="24" height="24" viewBox="0 0 24 24"><defs><linearGradient id="edg" x1="0" y1="0" x2="1" y2="0"><stop offset="0" stopColor="#22b8e0" /><stop offset="1" stopColor="#4fd04f" /></linearGradient></defs><circle cx="12" cy="12" r="12" fill="#1478d0" /><path d="M0 10C1 4 6 0 12 0c7 0 12 5 12 10.500 0 4-3 6-6 6-4 0-4-2-3-3.500C15.500 8 7 5 0 12z" fill="url(#edg)" /><path d="M12.500 10c-3 4 0 9.500 8.500 9.500 1.500-.7 2-1.500 1-1.500C16 20 11 15 12.500 10z" fill="#f3e3d4" /><path d="M9 11c-3 5 1 12 9 11.500C8 26-1 19 .2 11 3 8.500 6 9 9 11z" fill="#0f5ba8" /></svg> },
  { node: <svg width="24" height="24" viewBox="0 0 24 24"><path d="M7 6V2.500h10V6" fill="none" stroke="#3bb5e8" strokeWidth="2" /><path d="M.5 5.500h23V20a3 3 0 0 1-3 3h-17a3 3 0 0 1-3-3z" fill="#1b4f86" /><path d="M7 9.500h4.500V14H7z" fill="#f25022" /><path d="M12.500 9.500H17V14h-4.500z" fill="#7fba00" /><path d="M7 15h4.500v4.500H7z" fill="#00a4ef" /><path d="M12.500 15H17v4.500h-4.500z" fill="#ffb900" /></svg> },
  { run: true, node: <svg width="26" height="26" viewBox="0 0 26 26"><path d="M1 2h12v11H1zM14 2l10-1v10l-10 2z" fill="#b9c7d2" stroke="#7b8994" /><path d="M16 3l6-1v7l-6 1z" fill="#4fc4ea" /><path d="M8 17l-6 6" stroke="#c98638" strokeWidth="4" /><circle cx="13" cy="13" r="7" fill="#d5ecfa" stroke="#5aa0d8" strokeWidth="1.800" /></svg> },
  { node: <svg width="24" height="24" viewBox="0 0 24 24"><rect width="24" height="24" fill="#ee4036" /><path d="M9.500 7l5 5-5 5-5-5zM13.500 7l5 5-5 5-1.200-1.300L16 12l-3.700-3.700z" fill="#fff" /></svg> },
  { node: <Outlook s={24} /> },
  { node: <svg width="26" height="26" viewBox="0 0 26 26" stroke="#222"><rect x="12" y="2" width="11" height="9" fill="#bbb" /><rect x="14" y="4" width="7" height="5" fill="#1414d6" /><rect x="10" y="12" width="14" height="3" fill="#ccc" /><rect x="3" y="12" width="10" height="8" fill="#bbb" /><rect x="5" y="14" width="6" height="4" fill="#1414d6" /><rect x="1" y="21" width="14" height="3.500" fill="#ccc" /><path d="M19 8l-6 4 2 1-7 6 9-5-2-1z" fill="#ffee22" stroke="#a90" strokeWidth=".5" /></svg> },
  { node: <svg width="24" height="24" viewBox="0 0 24 24"><path d="M6.500 20.500a10 10 0 1 1 11 0" fill="none" stroke="#f58220" strokeWidth="4.500" /><circle cx="12" cy="12" r="3.800" fill="#1a355e" /><path d="M10.300 13h3.400l1 11H9.300z" fill="#1a355e" /></svg> },
  { run: true, node: <OfficeApp letter="X" colors={["#33c481", "#21a366", "#107c41", "#185c37"]} tile="#107c41" /> },
  { run: true, node: <OfficeApp letter="W" colors={["#41a5ee", "#2b7cd3", "#185abd", "#103f91"]} tile="#185abd" /> },
];

const FieldBox = ({ icon, label, value, lh }: { icon: React.ReactNode; label: string; value: string; lh: number }) => (
  <Field $lh={lh}><FieldIcon>{icon}</FieldIcon><div><FieldLabel>{label}</FieldLabel>{value}</div></Field>
);

export default function App() {
  return (
    <Screen>
      <GlobalStyle />
      <TabStrip>
        <TabSearch><svg width="10" height="7" viewBox="0 0 10 7" fill="none" stroke="#1f1f1f" strokeWidth="2"><path d="M1 1l4 4 4-4" /></svg></TabSearch>
        {browserTabs.map((t, i) => (
          <TabItem key={i} $last={i === browserTabs.length - 1}>
            {t.icon}<TabTitle $fade={t.title !== "Login"}>{t.title}</TabTitle><TabClose><MdClose size={13} /></TabClose>
          </TabItem>
        ))}
        <TabItem $active><BobIcon /><TabTitle $fade>Bob! D</TabTitle><TabClose><MdClose size={13} /></TabClose></TabItem>
        <NewTab><MdAdd size={17} /></NewTab>
        <WindowButtons>
          <svg width="12" height="12" viewBox="0 0 12 12"><path d="M1 6.500h10" stroke="#1f1f1f" /></svg>
          <svg width="12" height="12" viewBox="0 0 12 12" fill="none" stroke="#1f1f1f"><rect x="1" y="3" width="8" height="8" rx="1.500" /><path d="M3.500 1h5.500a2 2 0 0 1 2 2v5.500" /></svg>
          <svg width="12" height="12" viewBox="0 0 12 12" stroke="#1f1f1f" strokeWidth="1.200"><path d="M1 1l10 10M11 1L1 11" /></svg>
        </WindowButtons>
      </TabStrip>
      <ToolbarOuter>
        <Toolbar>
          <NavIcon><MdArrowBack size={18} /></NavIcon>
          <NavIcon $muted><MdArrowForward size={18} /></NavIcon>
          <NavIcon><MdRefresh size={19} /></NavIcon>
          <Omnibox>
            <SiteInfo>
              <svg width="14" height="14" viewBox="0 0 14 14" fill="none" stroke="#333" strokeWidth="1.600"><circle cx="3.200" cy="4" r="1.600" /><path d="M7 4h6M1 10h6" /><circle cx="10.800" cy="10" r="1.600" /></svg>
            </SiteInfo>
            <Url><b>bob-desk.com</b>/tickets/66293a932d5a230019e104f3</Url>
            <OmniIcons><MdInstallDesktop size={18} /><MdStarBorder size={19} /></OmniIcons>
          </Omnibox>
          <DownloadSlot>
            <svg width="20" height="20" viewBox="0 0 20 20" fill="none" stroke="#444" strokeWidth="2"><path d="M10 2v10M5.500 8l4.500 4.500L14.500 8M2.500 13v4h15v-4" /></svg>
          </DownloadSlot>
          <ProfileSlot>
            <svg width="20" height="20" viewBox="0 0 20 20"><circle cx="10" cy="10" r="10" fill="#fbc02d" /><path d="M1 7a10 10 0 0 1 18 0c-1 2-3-1-5-1.500S4 12 1 7z" fill="#d8174b" /><path d="M0 10c1 5 4 8 7 9l-2-7z" fill="#ef5a24" /><circle cx="9" cy="9.500" r="4.800" fill="#fbd9c2" /><circle cx="7.500" cy="9" r="1" fill="#722" /><circle cx="11" cy="8.500" r="1" fill="#722" /><path d="M9 16l5-3 2 2" stroke="#e8384f" strokeWidth="1.500" fill="none" /></svg>
          </ProfileSlot>
          <UpdatePill><span>Terminer la mise à jour</span><MdMoreVert size={19} /></UpdatePill>
        </Toolbar>
      </ToolbarOuter>
      <Bookmarks>
        {bookmarks.map((b) => <Bookmark key={b.t} $w={b.w}>{b.icon}{b.t}</Bookmark>)}
        <Overflow><svg width="11" height="10" viewBox="0 0 11 10" fill="none" stroke="#444" strokeWidth="1.700"><path d="M1 1l4 4-4 4M6 1l4 4-4 4" /></svg></Overflow>
      </Bookmarks>

      <Header>
        <Burger />
        <Brand>
          Bob! Desk
          <Feather width="12" height="20" viewBox="0 0 12 20"><path d="M4 0c5 3 7 6 6 10C8 7 6 3 4 0z" fill="#f08a3c" /><path d="M6 5c6 2 7 5 4 9z" fill="#e8384f" /><path d="M11 11c-1 4-3 6-5.500 8C5 15 7 13 11 11z" fill="#1fa3b5" /><path d="M0 5l6 6-1 3zM2 2l5 8-1 1z" fill="#7c5a55" /></Feather>
        </Brand>
        <CreateButton>
          <svg width="15" height="15" viewBox="0 0 15 15" stroke="#345b84" strokeWidth="1.300"><path d="M7.500 0v15M0 7.500h15" /></svg>
          <span>Créer une intervention</span>
        </CreateButton>
        <Avatar>B</Avatar>
      </Header>

      <Body>
        <Sidebar>
          {nav.map(([icon, label]) => (
            <NavItem key={label} $active={icon === "interventions"}><Duo name={icon} />{label}</NavItem>
          ))}
          <ChatBubble>
            <svg width="30" height="26" viewBox="0 0 30 26"><path d="M.5 4L28 .5l1 17-9 1-3.500 5-4.200-4L2 20.500z" fill="#fff" /></svg>
          </ChatBubble>
        </Sidebar>
        <Content>
          <ListPanel>
            <SearchRow>
              <MdMoreVert size={20} />
              <Placeholder>Rechercher parmi les 11 résultats...</Placeholder>
              <SearchIcons><MdLayersClear size={20} /><MdTune size={20} /><MdSave size={20} /></SearchIcons>
            </SearchRow>
            <FilterRow>
              <SortBars><i /><i /><i /></SortBars>
              <FilterChip $w={106} $on><CheckSlot><MdCheckCircle size={22} /></CheckSlot>En cours</FilterChip>
              <FilterChip $w={81}><Ring />Clos</FilterChip>
              <FilterChip $w={155}><Ring />Maintenances<MdArrowDropDown size={20} color="#757575" /></FilterChip>
              <FilterChip $w={155}><Ring />Sans intervenant</FilterChip>
            </FilterRow>
            <AssignRow><AssignChip>A assigner</AssignChip></AssignRow>
            <Scroller>
              <Tickets>
                {tickets.map((t) => (
                  <Ticket key={t.title} $selected={t.selected} $tail={!t.id}>
                    {t.id && (
                      <TicketTop>
                        <TicketId>{t.id}</TicketId><Status>En attente d'assignation</Status><Who>v</Who>
                        <Priority $urgent={t.urgent}>{t.urgent ? "URGENT" : "NON URGENT"}</Priority>
                      </TicketTop>
                    )}
                    <TitleRow><TicketTitle>{t.title}</TicketTitle><Jobs><Toolbox />2 métiers</Jobs></TitleRow>
                    <Desc>{t.desc}</Desc>
                    <TicketBottom><IconText><PinOutline />{t.place}</IconText><JobText><Spanner />{t.job}</JobText></TicketBottom>
                  </Ticket>
                ))}
              </Tickets>
              <Track />
            </Scroller>
          </ListPanel>

          <RightCol>
            <Detail>
              <DetailHead>
                <div>
                  <IdLine><TicketId $blue>#43588</TicketId><Status>En attente d'assignation</Status></IdLine>
                  <DetailTitle>Téléphone coloc de Rouffignac-Saint-Cernin-De-Reilhac</DetailTitle>
                  <Created>{"Créé le mercredi 24 avril 2024 à 19:00  par MAISON DE ROUFFIGNAC"}</Created>
                </div>
                <HeadDots><MdMoreVert size={30} /></HeadDots>
              </DetailHead>
              <PillRow>
                <Priority $narrow>NON URGENT</Priority>
                <SkillPill $w={160} $c="#267a0a"><Dot $c="#267a0a" />DIRECTION INFORMATIQUE</SkillPill>
                <SkillPill $w={146} $c="#0ca83f"><Dot $c="#0ca83f" />INFORMATIQUE MAISON</SkillPill>
                <Owner><OwnerIcon><MdPerson size={11} /></OwnerIcon>Becom O.</Owner>
                <TagSlot><Tags /><RedMinus><circle cx="5" cy="5" r="4.300" /><path d="M3 5h4" /></RedMinus></TagSlot>
              </PillRow>
              <InfoRow $mt={30} $h={32}>
                <LogoSlot>
                  <ClientLogo>
                    <svg width="18" height="3" viewBox="0 0 18 3"><path d="M0 3l4-2 5-.5 8 2.500" stroke="#ee8a1d" fill="none" /></svg>
                    <span>AGES</span><span>&amp;VIE</span><LogoBar />
                  </ClientLogo>
                </LogoSlot>
                <InfoText $ls={-0.05}><Label>Client</Label>Ages et Vie</InfoText>
                <RowDots><MdMoreVert size={20} /></RowDots>
              </InfoRow>
              <InfoRow $mt={17} $h={28}>
                <InfoIcon><Quote /></InfoIcon>
                <InfoText $lh={14} $ls={0.07}>{"Bonjour mr Zimmer  à activé  une ligne de téléphone  pour sa maman  mais sa ne marche pas.\nla coloc je pense un mauvais branchement  dans l armoire"}</InfoText>
              </InfoRow>
              <InfoRow $mt={19} $h={34}>
                <InfoIcon><SolidPin /></InfoIcon>
                <InfoText><Heading>ROUFFIGNAC SAINT CERNIN</Heading>1 Route de la Prehistoire , 24580 ROUFFIGNAC SAINT CERNIN DE REILHAC, France</InfoText>
              </InfoRow>
              <InfoRow $mt={20} $h={18}>
                <InfoIcon><SolidWrench /></InfoIcon>
                <Heading>Téléphonie maison PA</Heading>
              </InfoRow>
              <FieldGrid>
                <FieldBox lh={15} icon={<Calendar dot />} label="Date de passage programmé" value="Aucune date" />
                <FieldBox lh={15} icon={<Calendar />} label="Date d'intervention" value="Aucune date" />
                <FieldBox lh={16} icon={<DocSearch />} label="Devis" value="Aucun document" />
                <FieldBox lh={16} icon={<EuroSign />} label="Facture" value="Aucun document" />
              </FieldGrid>
              <Actions>
                <Action><span>Proposer</span><Mailbox /></Action>
                <Action><span>Assigner</span><WorkerLine /></Action>
              </Actions>
            </Detail>
            <TabBar>
              <Arrow><svg width="8" height="12" viewBox="0 0 8 12" fill="none" stroke="#7f99b4" strokeWidth="1.600"><path d="M6.500 1L1.500 6l5 5" /></svg></Arrow>
              {sections.map((s) => (
                <SectionTab key={s.t} $on={s.on}>
                  <TabGlyph>{sectionIcons[s.icon]}</TabGlyph>{s.t}{s.n && <Count $on={s.on}>{s.n}</Count>}
                </SectionTab>
              ))}
              <Arrow><svg width="8" height="12" viewBox="0 0 8 12" fill="none" stroke="#7f99b4" strokeWidth="1.600"><path d="M1.500 1l5 5-5 5" /></svg></Arrow>
            </TabBar>
            <NextPanel />
          </RightCol>
          <Fab />
          <PageScroll />
        </Content>
      </Body>

      <Taskbar>
        <svg width="24" height="24" viewBox="0 0 24 24"><path d="M0 0h11.500v11.500H0zM12.500 0H24v11.500H12.500z" fill="#2fb0ee" /><path d="M0 12.500h11.500V24H0zM12.500 12.500H24V24H12.500z" fill="#0f84dc" /></svg>
        <SearchBox>
          <svg width="16" height="16" viewBox="0 0 16 16" fill="none" stroke="#2b2b2b" strokeWidth="1.800"><circle cx="7" cy="7" r="5.500" /><path d="M11 11l4 4" /></svg>
          Rechercher
        </SearchBox>
        {taskApps.map((a, i) => (
          <AppSlot key={i} $focus={a.focus}>{a.node}{a.temp && <Temp>16°</Temp>}{(a.run || a.focus) && <Running $focus={a.focus} />}</AppSlot>
        ))}
        <Clock><span>10:36</span><span>27/05/2024</span></Clock>
      </Taskbar>
    </Screen>
  );
}
